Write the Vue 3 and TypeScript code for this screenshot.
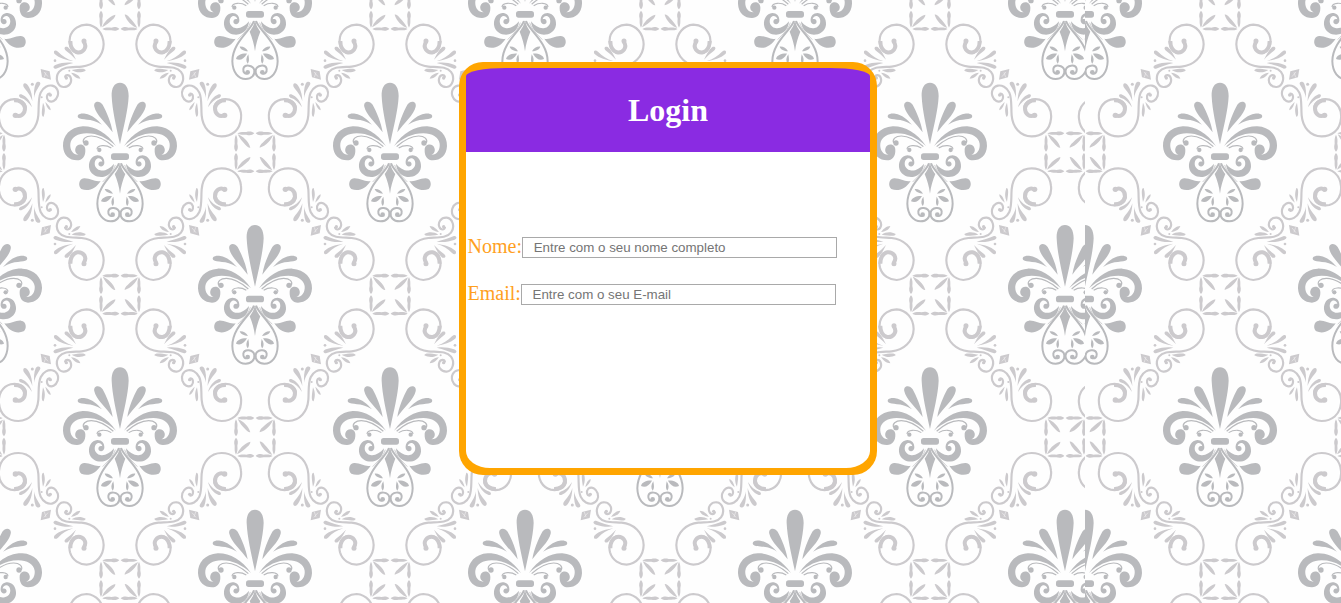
<script setup lang="ts">
interface Region { id: string; x: number; width: number; shift: number }
interface Point { key: string; x: number; y: number }

const regions: Region[] = [
  { id: 'left', x: 0, width: 1085, shift: 0 },
  { id: 'right', x: 1085, width: 256, shift: 20 },
]

// Pattern units are thirds of a pixel: one repeat is 810 x 854.
const tiles: Point[] = []
for (let c = -1; c < 6; c++) {
  for (let r = -1; r < 3; r++) {
    tiles.push({ key: `${c}:${r}`, x: c * 810, y: r * 854 })
  }
}
const mirrors = ['', 'matrix(-1 0 0 1 720 0)', 'matrix(1 0 0 -1 0 912)', 'matrix(-1 0 0 -1 720 912)']
const turns = [0, 90, 180, 270]
const fields = [
  { id: 'nome', label: 'Nome:', hint: 'Entre com o seu nome completo' },
  { id: 'email', label: 'Email:', hint: 'Entre com o seu E-mail' },
]
</script>

<template>
  <main class="page">
    <svg class="wallpaper" width="1341" height="603" viewBox="0 0 1341 603" aria-hidden="true">
      <defs>
        <g id="half-fleur">
          <path d="M22 171C26 142 41 108 52 88C62 73 81 78 77 94C72 118 42 143 22 171Z" />
          <path d="M54 148C68 133 84 118 104 115C122 112 131 120 125 127C116 136 88 126 54 148Z" />
          <path d="M12 212C40 172 76 152 112 153C150 155 172 182 171 212C170 240 151 255 129 255C113 255 103 243 104 223C104 204 130 202 134 220C136 230 130 236 124 238C140 239 151 224 149 205C146 185 126 174 100 174C66 174 40 188 12 212Z" />
          <path class="line" d="M20 214C40 196 64 182 86 182C104 182 114 192 109 203" />
          <circle cx="102" cy="203" r="8" />
          <path class="line" d="M26 218C42 208 68 208 69 222" />
          <circle cx="62" cy="224" r="6.5" />
          <path d="M47 264C46 248 55 240 68 240C86 242 94 258 93 275C90 300 65 308 48 304C30 300 20 285 18 265C30 280 46 288 59 285C76 281 79 264 73 254C66 244 54 250 53 259C62 256 67 264 64 270C58 277 48 273 47 264Z" />
          <path d="M58 317C76 321 88 308 108 309C125 311 126 334 116 341C95 350 72 340 58 317Z" />
          <path class="drop" d="M3 264C12 292 68 328 68 385C67 419 50 438 28 438C10 438 0 426 2 412C5 395 32 393 35 408C36 419 30 423 23 422" />
          <path class="hair" d="M14 269C20 290 38 305 52 320" />
          <circle cx="22" cy="418" r="7" />
          <path d="M21 355C26 345 36 340 46 341C43 350 33 354 21 355Z" />
          <path d="M24 362C40 361 55 367 57 378C44 384 34 378 24 362Z" />
          <path d="M20 364C27 374 28 384 22 392C16 386 18 376 20 364Z" />
        </g>
        <g id="fleur" class="fleur">
          <path d="M0 22C-17 22 -26 38 -25 62C-23 105 -12 150 0 207C12 150 24 105 26 62C26 38 17 22 0 22Z" />
          <rect x="-27" y="234" width="54" height="20" rx="8" />
          <path d="M0 262C4 280 9 286 16 296C8 316 3 332 0 355C-3 332 -8 316 -16 296C-9 286 -4 280 0 262Z" />
          <use href="#half-fleur" />
          <use href="#half-fleur" transform="scale(-1 1)" />
        </g>
        <g id="scrolls" class="scrolls">
          <g transform="translate(360 225)">
            <path class="ring" d="M282 98C284 78 306 68 328 73C354 80 366 105 363 130C360 165 335 183 305 183C270 183 248 155 245 120C243 92 246 70 238 52C230 35 215 29 204 31C189 34 183 48 187 62C192 77 205 83 215 76C222 68 220 54 209 55" />
            <path class="fat" d="M315 118C300 129 284 116 285 98C288 82 303 74 318 75" />
            <circle cx="314" cy="120" r="8" />
            <circle cx="209" cy="59" r="5" />
            <path d="M257 68C256 50 246 40 239 26C238 17 250 18 253 25C258 38 259 52 257 68Z" />
            <path d="M263 78C263 57 269 39 279 27C287 20 293 27 289 35C281 47 268 59 263 78Z" />
            <path d="M264 96C269 78 280 63 296 57C304 56 305 63 299 67C284 71 274 81 264 96Z" />
            <path d="M231 82C223 98 225 111 229 124C238 124 234 102 231 82Z" />
            <path d="M224 80C218 86 207 95 208 105C217 102 221 92 224 80Z" />
            <circle cx="263" cy="27" r="4.5" /><circle cx="235" cy="66" r="3" />
          </g>
          <path class="ring" d="M491 158C508 152 515 130 510 110C503 85 480 73 460 73C430 75 410 100 409 132C410 170 440 196 475 199C505 201 530 198 543 215C556 232 548 258 530 260C512 261 503 245 508 232C512 222 524 222 525 232" />
          <path class="fat" d="M469 124C456 142 472 159 489 156C502 152 509 137 509 122" />
          <circle cx="468" cy="122" r="7.5" /><circle cx="521" cy="233" r="5" />
          <path d="M492 178C500 162 507 148 517 140C526 137 530 145 522 151C512 159 502 167 492 178Z" />
          <path d="M500 182C520 176 533 167 546 154C554 147 561 151 557 160C542 174 521 179 500 182Z" />
          <path d="M500 188C519 185 537 188 552 193C563 197 561 205 552 205C537 199 520 193 500 188Z" />
          <circle cx="555" cy="181" r="4" /><circle cx="512" cy="211" r="3" />
          <path d="M505 209C491 218 477 218 463 211C464 203 480 205 505 209Z" />
          <path d="M507 217C500 226 491 235 479 235C481 226 491 219 507 217Z" />
          <path d="M571 213L598 206L594 231L567 238Z" />
          <path class="glint" d="M576 229L588 215M587 231L582 216" />
        </g>
        <g id="arm">
          <path d="M-53 -57C-44 -62 -36 -61 -26 -61C-15 -64 -8 -62 -2 -57C-8 -51 -16 -50 -26 -53C-36 -52 -44 -52 -53 -57Z" />
          <path d="M53 -57C44 -62 36 -61 26 -61C15 -64 8 -62 2 -57C8 -51 16 -50 26 -53C36 -52 44 -52 53 -57Z" />
          <path d="M-52 -54C-37 -49 -19 -33 -14 -14C-19 -13 -25 -18 -29 -23C-39 -33 -46 -42 -52 -54Z" />
        </g>
        <g id="square" class="scrolls">
          <use v-for="t in turns" :key="t" href="#arm" :transform="`rotate(${t})`" />
        </g>
        <g id="repeat">
          <use v-for="m in mirrors" :key="m" href="#scrolls" :transform="m" />
          <use href="#square" x="360" y="29" />
          <use href="#square" x="765" y="456" />
          <use href="#fleur" x="360" y="225" />
          <use href="#fleur" x="765" y="-202" />
        </g>
        <clipPath v-for="r in regions" :id="`clip-${r.id}`" :key="r.id">
          <rect :x="r.x" y="0" :width="r.width" height="603" />
        </clipPath>
      </defs>
      <g v-for="r in regions" :key="r.id" :clip-path="`url(#clip-${r.id})`">
        <g :transform="`translate(${r.shift} 0.3) scale(.33333)`">
          <use v-for="t in tiles" :key="t.key" href="#repeat" :x="t.x" :y="t.y" />
        </g>
      </g>
    </svg>

    <section class="card">
      <header class="head"><h1>Login</h1></header>
      <form class="form" @submit.prevent>
        <div v-for="f in fields" :key="f.id" class="row">
          <label :for="f.id">{{ f.label }}</label>
          <input :id="f.id" type="text" :placeholder="f.hint" />
        </div>
      </form>
    </section>
  </main>
</template>

<style>
body { margin: 0; overflow: hidden; }
</style>

<style scoped>
.page {
  position: relative;
  width: 1341px;
  height: 603px;
  box-sizing: border-box;
  padding: 62px 0 0 459px;
  overflow: hidden;
  background: #fefefe;
  font-family: "Liberation Serif", "Times New Roman", serif;
}
.wallpaper { position: absolute; left: 0; top: 0; }
.fleur { fill: #b9babd; }
.line, .drop, .hair { fill: none; stroke: #b9babd; stroke-width: 3.5; }
.drop { stroke-width: 6; }
.hair { stroke-width: 2; }
.scrolls { fill: #cccacd; }
.ring { fill: none; stroke: #cccacd; stroke-width: 6.5; }
.fat { fill: none; stroke: #cccacd; stroke-width: 12; }
.glint { fill: none; stroke: #eeedef; stroke-width: 2; }
.card {
  position: relative;
  box-sizing: border-box;
  width: 418px;
  height: 413px;
  padding: 6px 7px 7px;
  border-radius: 24px;
  background: #ffa500;
}
.head {
  height: 84px;
  display: flex;
  align-items: center;
  justify-content: center;
  border-radius: 40px 40px 0 0 / 8px 8px 0 0;
  background: #8a2be2;
}
h1 {
  margin: 0;
  color: #fff;
  font-size: 32px;
  line-height: 37px;
  font-weight: bold;
}
.form {
  box-sizing: border-box;
  height: 316px;
  padding: 82px 0 0 1.6px;
  border-radius: 0 0 24px 24px / 0 0 17px 17px;
  background: #fff;
}
.row { display: flex; height: 47px; align-items: flex-start; }
label { color: #ffa01e; font-size: 20px; line-height: 25px; }
input {
  box-sizing: border-box;
  width: 315px;
  height: 21px;
  margin: 3px 0 0;
  padding: 1px 2px 1px 10.6px;
  border: 1px solid #a9a9a9;
  border-radius: 0;
  outline: none;
  background: #fff;
  font: 13.333px "Liberation Sans", Arial, sans-serif;
}
input::placeholder { color: #757575; opacity: 1; }
</style>
